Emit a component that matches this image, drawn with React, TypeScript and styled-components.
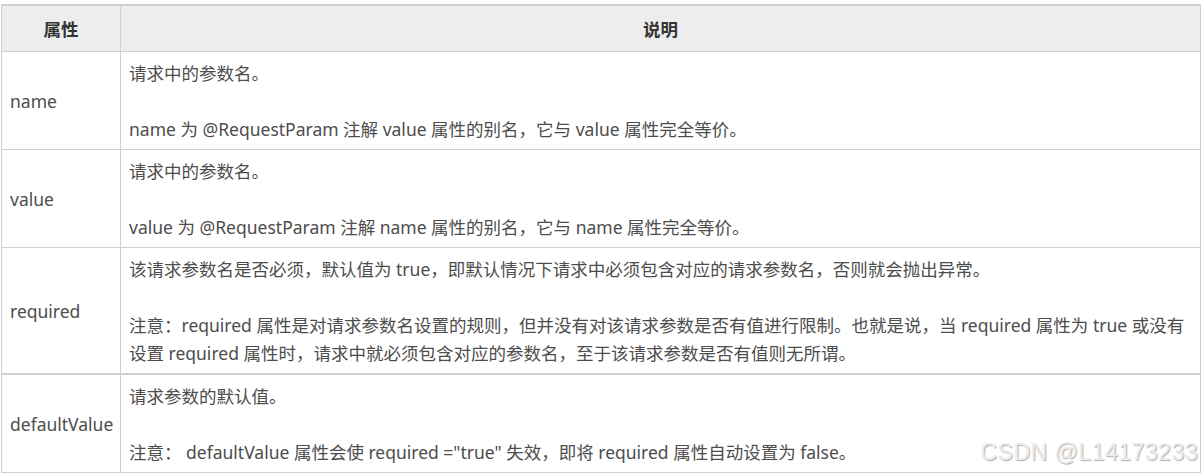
import { createGlobalStyle, styled } from "styled-components";

interface Param {
  name: string;
  paragraphs: string[][];
  thickBottom?: boolean;
}

const GlobalStyle = createGlobalStyle`
  html, body {
    margin: 0;
    padding: 0;
    background: #fff;
  }
  body {
    font-family: "Noto Sans", "Noto Sans CJK SC", sans-serif;
  }
`;

const Page = styled.div`
  position: relative;
  width: 1202px;
  height: 474px;
  padding: 4px 0 0 1px;
  box-sizing: border-box;
`;

const Table = styled.table`
  width: 1200px;
  border-collapse: collapse;
  border-top: 2px solid #cfcfcf;
  font-size: 17.5px;
  color: #4d4d4d;
  table-layout: fixed;
`;

const Th = styled.th<{ $width?: number }>`
  width: ${(p) => (p.$width ? `${p.$width}px` : "auto")};
  height: 45px;
  padding: 0 8px;
  background: #ededed;
  border: 1px solid #d0d0d0;
  border-top: none;
  font-weight: bold;
  color: #333;
  text-align: center;
  vertical-align: middle;
  line-height: 28px;
`;

const Tr = styled.tr<{ $thick?: boolean }>`
  border-bottom: ${(p) => (p.$thick ? "2px" : "1px")} solid #d0d0d0;
`;

const NameCell = styled.td`
  padding: 6px 8px;
  border-left: 1px solid #d0d0d0;
  border-right: 1px solid #d0d0d0;
  vertical-align: middle;
  line-height: 28px;
  white-space: nowrap;
`;

const DescCell = styled.td`
  padding: 7px 8px 6px;
  border-right: 1px solid #d0d0d0;
  vertical-align: top;
  line-height: 28px;
`;

const P = styled.p`
  margin: 0;
  white-space: nowrap;
  & + & {
    margin-top: 28px;
  }
`;

const Watermark = styled.div`
  position: absolute;
  right: 4px;
  bottom: 8px;
  font-family: "Liberation Sans", Arial, sans-serif;
  font-size: 23px;
  letter-spacing: 0.5px;
  color: #ececec;
  text-shadow: 1px 1px 1px #b0b0b0;
  pointer-events: none;
`;

const params: Param[] = [
  {
    name: "name",
    paragraphs: [
      ["请求中的参数名。"],
      ["name 为 @RequestParam 注解 value 属性的别名，它与 value 属性完全等价。"],
    ],
  },
  {
    name: "value",
    paragraphs: [
      ["请求中的参数名。"],
      ["value 为 @RequestParam 注解 name 属性的别名，它与 name 属性完全等价。"],
    ],
  },
  {
    name: "required",
    thickBottom: true,
    paragraphs: [
      ["该请求参数名是否必须，默认值为 true，即默认情况下请求中必须包含对应的请求参数名，否则就会抛出异常。"],
      [
        "注意：required 属性是对请求参数名设置的规则，但并没有对该请求参数是否有值进行限制。也就是说，当 required 属性为 true 或没有",
        "设置 required 属性时，请求中就必须包含对应的参数名，至于该请求参数是否有值则无所谓。",
      ],
    ],
  },
  {
    name: "defaultValue",
    paragraphs: [
      ["请求参数的默认值。"],
      ["注意： defaultValue 属性会使 required =\"true\" 失效，即将 required 属性自动设置为 false。"],
    ],
  },
];

export default function App() {
  return (
    <Page>
      <GlobalStyle />
      <Table>
        <thead>
          <tr>
            <Th $width={102}>属性</Th>
            <Th>说明</Th>
          </tr>
        </thead>
        <tbody>
          {params.map((p) => (
            <Tr key={p.name} $thick={p.thickBottom}>
              <NameCell>{p.name}</NameCell>
              <DescCell>
                {p.paragraphs.map((lines, i) => (
                  <P key={i}>
                    {lines.map((line, j) => (
                      <span key={j}>
                        {j > 0 && <br />}
                        {line}
                      </span>
                    ))}
                  </P>
                ))}
              </DescCell>
            </Tr>
          ))}
        </tbody>
      </Table>
      <Watermark>CSDN @L14173233</Watermark>
    </Page>
  );
}
